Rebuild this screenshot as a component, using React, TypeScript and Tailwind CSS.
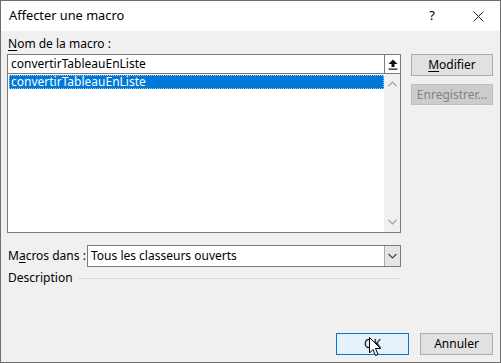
import { ReactNode } from "react";

const font = { fontFamily: '"Noto Sans", "Segoe UI", sans-serif' };

// Win32-style push button
const PushButton = ({ children, className = "" }: { children: ReactNode; className?: string }) => (
  <div className={`flex items-center justify-center border text-[12px] leading-none ${className}`}>
    {children}
  </div>
);

const Chevron = ({ up = false, color = "#a0a0a0" }: { up?: boolean; color?: string }) => (
  <svg width="9" height="6" viewBox="0 0 9 6">
    <path d={up ? "M0.5 5 L4.5 1 L8.5 5" : "M0.5 1 L4.5 5 L8.5 1"} fill="none" stroke={color} strokeWidth="1.2" />
  </svg>
);

const Cursor = () => (
  <svg className="absolute left-[368px] top-[336px]" width="13" height="20" viewBox="0 0 13 20">
    <path d="M0.5 0.5 L0.5 16 L4 12.5 L6.5 18.5 L9 17.5 L6.5 11.5 L11.5 11.5 Z" fill="white" stroke="black" strokeWidth="1" strokeLinejoin="round" />
  </svg>
);

export default function App() {
  return (
    <div style={font} className="relative w-[501px] h-[363px] border border-[#6e6e6e] bg-[#f0f0f0] flex flex-col text-[12px] text-black">
      <div className="h-[30px] bg-white flex items-center pl-[8px] shrink-0">
        <span className="text-[12.8px]">Affecter une macro</span>
        <span className="ml-auto mr-[38px] text-[13px]">?</span>
        <svg className="mr-[16px]" width="11" height="11" viewBox="0 0 11 11">
          <path d="M0.5 0.5 L10.5 10.5 M10.5 0.5 L0.5 10.5" stroke="#222" strokeWidth="1" />
        </svg>
      </div>

      <div className="flex-1 flex flex-col pl-[6px] pr-[7px] pb-[7px]">
        <div className="flex">
          <div className="w-[394px] flex flex-col">
            <div className="h-[23px] pt-[5px] pl-[1px] leading-[16px]">
              <span className="underline underline-offset-2">N</span>om de la macro :
            </div>
            <div className="h-[20px] border border-[#7a7a7a] bg-white flex items-center">
              <span className="pl-[3px] leading-none">convertirTableauEnListe</span>
              <div className="ml-auto w-[16px] h-full border-l border-[#7a7a7a] flex flex-col items-center justify-center">
                <svg width="10" height="11" viewBox="0 0 10 11">
                  <path d="M5 0.5 L9.5 5 L6.5 5 L6.5 8 L3.5 8 L3.5 5 L0.5 5 Z" fill="#111" />
                  <rect x="0.5" y="9.5" width="9" height="1.2" fill="#111" />
                </svg>
              </div>
            </div>
            <div className="h-[159px] border border-t-0 border-[#7a7a7a] bg-white flex">
              <div className="flex-1 pt-[1px] pl-[1px]">
                <div className="h-[14px] bg-[#0078d7] text-white border border-dotted border-[#9fc7ec] flex items-center pl-[1px] leading-none">
                  convertirTableauEnListe
                </div>
              </div>
              <div className="w-[16px] bg-[#f0f0f0] flex flex-col items-center justify-between pt-[7px] pb-[7px]">
                <Chevron up />
                <Chevron />
              </div>
            </div>
          </div>
          <div className="ml-[10px] pt-[23px] flex flex-col">
            <PushButton className="w-[82px] h-[22px] bg-[#e1e1e1] border-[#adadad]">
              <span><span className="underline underline-offset-2">M</span>odifier</span>
            </PushButton>
            <PushButton className="mt-[8px] w-[82px] h-[21px] bg-[#cccccc] border-[#bfbfbf] text-[#838383]">
              Enregistrer...
            </PushButton>
          </div>
        </div>

        <div className="mt-[12px] flex items-center w-[394px]">
          <span className="w-[80px] pl-[1px]">
            M<span className="underline underline-offset-2">a</span>cros dans :
          </span>
          <div className="flex-1 h-[22px] border border-[#7a7a7a] bg-white flex items-center">
            <span className="pl-[3px] leading-none">Tous les classeurs ouverts</span>
            <div className="ml-auto w-[16px] h-full bg-[#e5e5e5] border-l border-[#acacac] flex items-center justify-center">
              <Chevron color="#444" />
            </div>
          </div>
        </div>

        <div className="mt-[1px] h-[20px] flex items-center w-[394px]">
          <span className="pl-[1px]">Description</span>
          <div className="flex-1 ml-[6px] mt-[1px] border-t border-[#dcdcdc]" />
        </div>

        <div className="mt-auto flex justify-end gap-[11px]">
          <PushButton className="w-[73px] h-[22px] bg-[#e5f1fb] border-[#0078d7]">OK</PushButton>
          <PushButton className="w-[73px] h-[22px] bg-[#e1e1e1] border-[#adadad]">Annuler</PushButton>
        </div>
      </div>
      <Cursor />
    </div>
  );
}
